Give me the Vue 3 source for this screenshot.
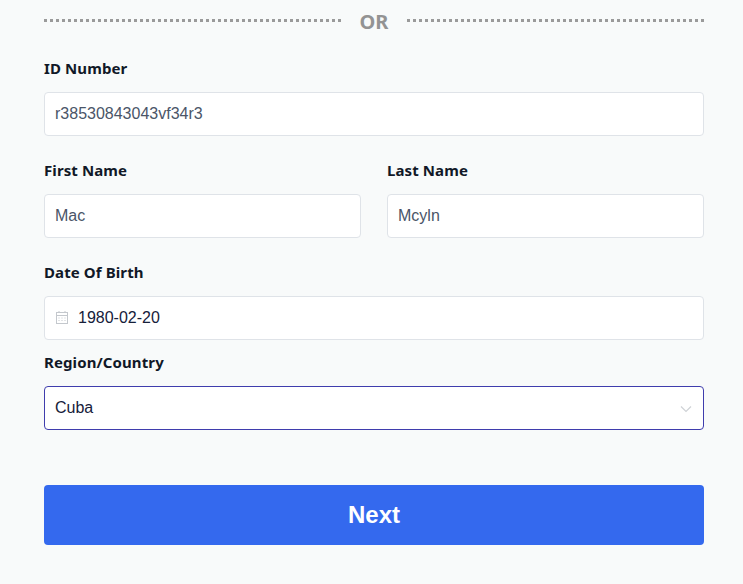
<template>
  <div class="page">
    <form class="form" @submit.prevent>
      <div class="divider">
        <span class="dots"></span>
        <span class="or">OR</span>
        <span class="dots"></span>
      </div>

      <div class="field first">
        <label class="label">ID Number</label>
        <input class="control muted" type="text" value="r38530843043vf34r3" />
      </div>

      <div class="row">
        <div class="field">
          <label class="label">First Name</label>
          <input class="control muted" type="text" value="Mac" />
        </div>
        <div class="field">
          <label class="label">Last Name</label>
          <input class="control muted" type="text" value="Mcyln" />
        </div>
      </div>

      <div class="field">
        <label class="label">Date Of Birth</label>
        <div class="with-icon">
          <svg class="calendar" viewBox="0 0 12 13" width="12" height="13" fill="none" stroke="#c4c8cd" stroke-width="1">
            <rect x="0.5" y="1.5" width="11" height="11" />
            <path d="M0.5 4.5h11" />
            <path d="M3 0v2M9 0v2" />
            <path d="M2.5 7h1M5.5 7h1M8.5 7h1M2.5 9.5h1M5.5 9.5h1M8.5 9.5h1" />
          </svg>
          <input class="control date" type="text" value="1980-02-20" />
        </div>
      </div>

      <div class="field tight">
        <label class="label">Region/Country</label>
        <div class="with-arrow">
          <select class="control select">
            <option>Cuba</option>
          </select>
          <svg class="chevron" viewBox="0 0 12 8" width="12" height="8" fill="none" stroke="#cfd2d6" stroke-width="1.2">
            <path d="M1 1.5l5 5 5-5" />
          </svg>
        </div>
      </div>

      <button class="next" type="submit">Next</button>
    </form>
  </div>
</template>

<script setup>
</script>

<style>
html, body {
  margin: 0;
  background: #f8fafa;
}
</style>

<style scoped>
.page {
  height: 584px;
  overflow: hidden;
  background: #f8fafa;
  padding: 12px 39px 0 44px;
  box-sizing: border-box;
}

.form {
  display: flex;
  flex-direction: column;
}

.divider {
  display: flex;
  align-items: center;
  justify-content: space-between;
  height: 20px;
}

.dots {
  width: 297px;
  border-top: 3px dotted #9a9a9a;
  margin-top: -4px;
}

.or {
  font-family: "Noto Sans", sans-serif;
  font-size: 20px;
  font-weight: 700;
  color: #939393;
  line-height: 20px;
}

.field {
  margin-top: 24px;
  flex: 1;
  min-width: 0;
}

.field.first {
  margin-top: 26px;
}

.field.tight {
  margin-top: 12px;
}

.row {
  display: flex;
  gap: 26px;
}

.label {
  display: block;
  font-family: "Noto Sans", sans-serif;
  font-size: 15px;
  font-weight: 700;
  letter-spacing: 0.1px;
  line-height: 20px;
  color: #111827;
  margin-bottom: 14px;
}

.control {
  display: block;
  width: 100%;
  height: 44px;
  box-sizing: border-box;
  border: 1px solid #dfe3e8;
  border-radius: 4px;
  background: #fff;
  padding: 0 10px;
  font-family: "Liberation Sans", Arial, sans-serif;
  font-size: 16px;
  color: #16203a;
  outline: none;
}

.muted {
  color: #4a5568;
}

.with-icon,
.with-arrow {
  position: relative;
}

.date {
  padding-left: 33px;
}

.calendar {
  position: absolute;
  left: 12px;
  top: 15px;
}

.select {
  appearance: none;
  border-color: #3f3dad;
  padding-bottom: 1px;
}

.chevron {
  position: absolute;
  right: 12px;
  top: 19px;
}

.next {
  margin-top: 55px;
  height: 60px;
  border: 0;
  border-radius: 4px;
  background: #3469ee;
  color: #fff;
  font-family: "Liberation Sans", Arial, sans-serif;
  font-size: 24px;
  font-weight: 700;
}
</style>
